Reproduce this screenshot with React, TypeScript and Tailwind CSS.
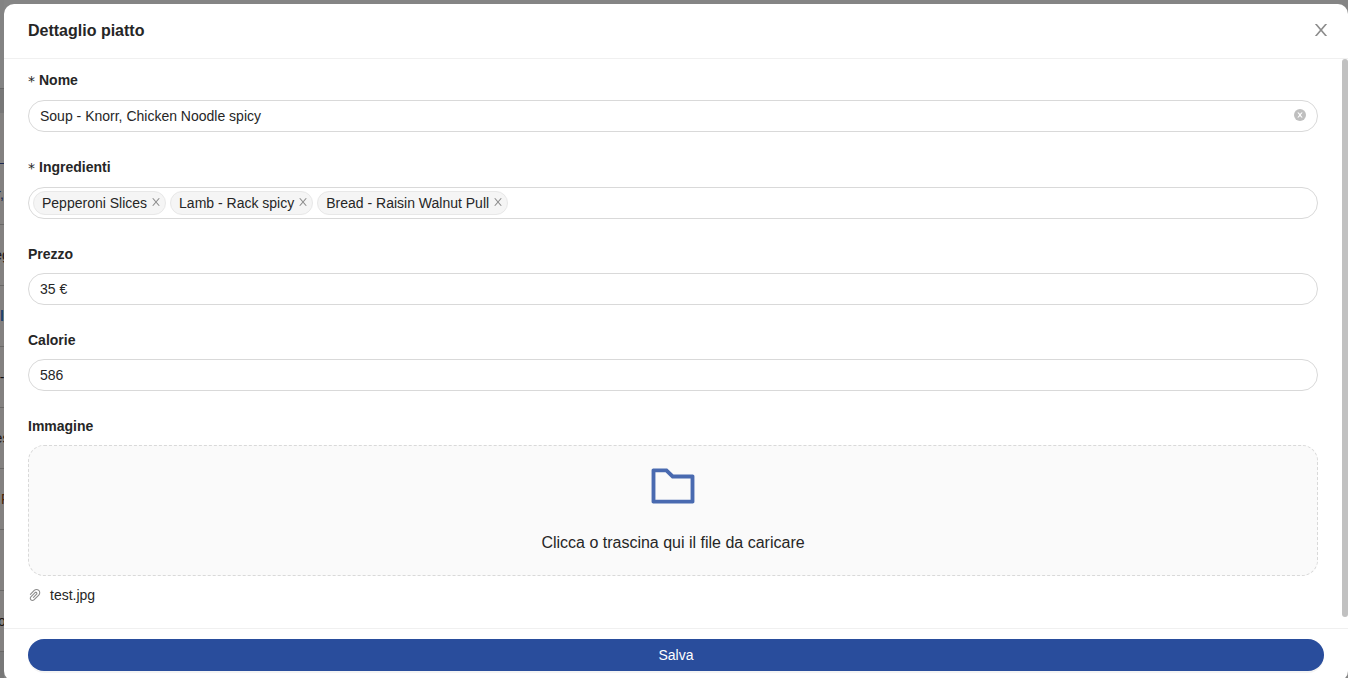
import { useState } from "react";
import type { ReactNode } from "react";
import { AiOutlineFolder, AiOutlinePaperClip } from "react-icons/ai";

const iconBox = "64 64 896 896";

type IconProps = { className?: string };

function CloseIcon({ className }: IconProps) {
  return (
    <svg viewBox={iconBox} fill="currentColor" aria-hidden="true" className={className}>
      <path d="M168 176h116L512 444 740 176h116L572 512l284 336H740L512 580 284 848H168L452 512z" />
    </svg>
  );
}

function ClearIcon({ className }: IconProps) {
  return (
    <svg viewBox={iconBox} aria-hidden="true" className={className}>
      <circle cx="512" cy="512" r="448" fill="currentColor" />
      <path d="M312 332h104l96 108 96-108h104L562 512l150 180H608l-96-108-96 108H312l150-180z" fill="white" />
    </svg>
  );
}

type FieldProps = { id: string; label: string; required?: boolean; children: ReactNode };

function Field({ id, label, required, children }: FieldProps) {
  return (
    <div className="flex flex-col gap-2">
      <label
        htmlFor={id}
        className={`flex items-start gap-1 font-bold leading-[22px] ${required ? "h-[23px]" : "h-[22px]"}`}
      >
        {required && <span className="font-['DejaVu_Sans',sans-serif] font-normal leading-6">*</span>}
        {label}
      </label>
      {children}
    </div>
  );
}

const inputClass =
  "h-8 w-full rounded-full border border-[#d9d9d9] bg-white px-[11px] text-[#262626] outline-none focus:border-[#294d9c]";

const rows = [
  { text: "r,", style: "text-[#101c4a] justify-end" },
  { text: "eg", style: "text-[#1c1410] justify-center" },
  { text: "l", style: "text-[#1b3f6b] font-bold justify-center" },
  { text: "-", style: "text-[#111111] justify-center" },
  { text: "es", style: "text-[#1c1410] justify-center" },
  { text: "F", style: "text-[#4a2408] justify-start pl-px" },
  { text: "", style: "text-[#111111] justify-center" },
  { text: "o", style: "text-[#1c1410] justify-center" },
];

function Backdrop() {
  return (
    <div aria-hidden="true" className="flex w-1 shrink-0 flex-col overflow-hidden bg-[#838180]">
      <div className="h-[88px] shrink-0 bg-[#838383]" />
      <div className="h-[25px] shrink-0 border-t border-[#666666] bg-[#777777]" />
      <div className="h-[51px] shrink-0 border-b border-[#1c2850]" />
      {rows.map((row, i) => (
        <div key={i} className={`flex h-[61px] shrink-0 items-center border-b border-[#696867] ${row.style}`}>
          {row.text}
        </div>
      ))}
      <div className="flex-1 bg-[#787878]" />
    </div>
  );
}

export default function App() {
  const [name, setName] = useState("Soup - Knorr, Chicken Noodle spicy");
  const [tags, setTags] = useState(["Pepperoni Slices", "Lamb - Rack spicy", "Bread - Raisin Walnut Pull"]);
  const [price, setPrice] = useState("35 €");
  const [calories, setCalories] = useState("586");

  return (
    <div className="flex h-screen overflow-hidden bg-[#858585] font-['Liberation_Sans',Arial,sans-serif] text-sm leading-[22px] text-[#262626]">
      <Backdrop />
      <div className="min-w-0 flex-1 pt-1">
        <div role="dialog" aria-labelledby="dialog-title" className="flex flex-col rounded-[10px] bg-white">
          <header className="flex h-[55px] items-center justify-between border-b border-[#f0f0f0] pl-6 pr-[19px]">
            <h1 id="dialog-title" className="text-base font-bold">
              Dettaglio piatto
            </h1>
            <button type="button" aria-label="Chiudi" className="pb-[2px] text-[#8c8c8c]">
              <CloseIcon className="size-4" />
            </button>
          </header>

          <form id="dish" className="relative flex flex-col gap-6 pt-[10px] pr-[30px] pb-[22px] pl-6">
            <Field id="name" label="Nome" required>
              <div className="flex h-8 items-center rounded-full border border-[#d9d9d9] px-[11px] focus-within:border-[#294d9c]">
                <input
                  id="name"
                  className="min-w-0 flex-1 text-[#262626] outline-none"
                  value={name}
                  onChange={(e) => setName(e.target.value)}
                />
                <button type="button" aria-label="Cancella" className="pb-[2px] text-[#bfbfbf]" onClick={() => setName("")}>
                  <ClearIcon className="size-3" />
                </button>
              </div>
            </Field>

            <Field id="ingredients" label="Ingredienti" required>
              <div className="flex h-8 items-center gap-1 rounded-full border border-[#d9d9d9] px-1">
                {tags.map((tag) => (
                  <span
                    key={tag}
                    className="flex h-6 items-center gap-1 whitespace-nowrap rounded-full border border-[#e8e8e8] bg-[#f5f5f5] pl-2 pr-1"
                  >
                    {tag}
                    <button
                      type="button"
                      aria-label={`Rimuovi ${tag}`}
                      className="pb-[2px] text-[#8c8c8c]"
                      onClick={() => setTags(tags.filter((t) => t !== tag))}
                    >
                      <CloseIcon className="size-[10px]" />
                    </button>
                  </span>
                ))}
                <input id="ingredients" className="min-w-0 flex-1 outline-none" />
              </div>
            </Field>

            <Field id="price" label="Prezzo">
              <input id="price" className={inputClass} value={price} onChange={(e) => setPrice(e.target.value)} />
            </Field>

            <Field id="calories" label="Calorie">
              <input
                id="calories"
                className={inputClass}
                value={calories}
                onChange={(e) => setCalories(e.target.value)}
              />
            </Field>

            <Field id="image" label="Immagine">
              <button
                type="button"
                id="image"
                className="flex h-[131px] flex-col items-center rounded-2xl border border-dashed border-[#d9d9d9] bg-[#fafafa] pt-4"
              >
                <AiOutlineFolder viewBox={iconBox} className="size-12 text-[#496ab0]" />
                <span className="mt-5 text-base leading-[26px]">Clicca o trascina qui il file da caricare</span>
              </button>
              <div className="flex h-[22px] items-center gap-2">
                <AiOutlinePaperClip viewBox={iconBox} className="size-[14px] text-[#8c8c8c]" />
                <a href="#test" className="text-[#262626]">
                  test.jpg
                </a>
              </div>
            </Field>

            <div className="absolute top-0 right-0 h-[98%] w-[6px] rounded-full bg-[#c1c1c1]" />
          </form>

          <footer className="border-t border-[#f0f0f0] px-6 py-[10px]">
            <button
              type="submit"
              form="dish"
              className="h-8 w-full rounded-full bg-[#294d9c] text-white shadow-[0_2px_0_rgba(0,0,0,0.045)]"
            >
              Salva
            </button>
          </footer>
        </div>
      </div>
    </div>
  );
}
